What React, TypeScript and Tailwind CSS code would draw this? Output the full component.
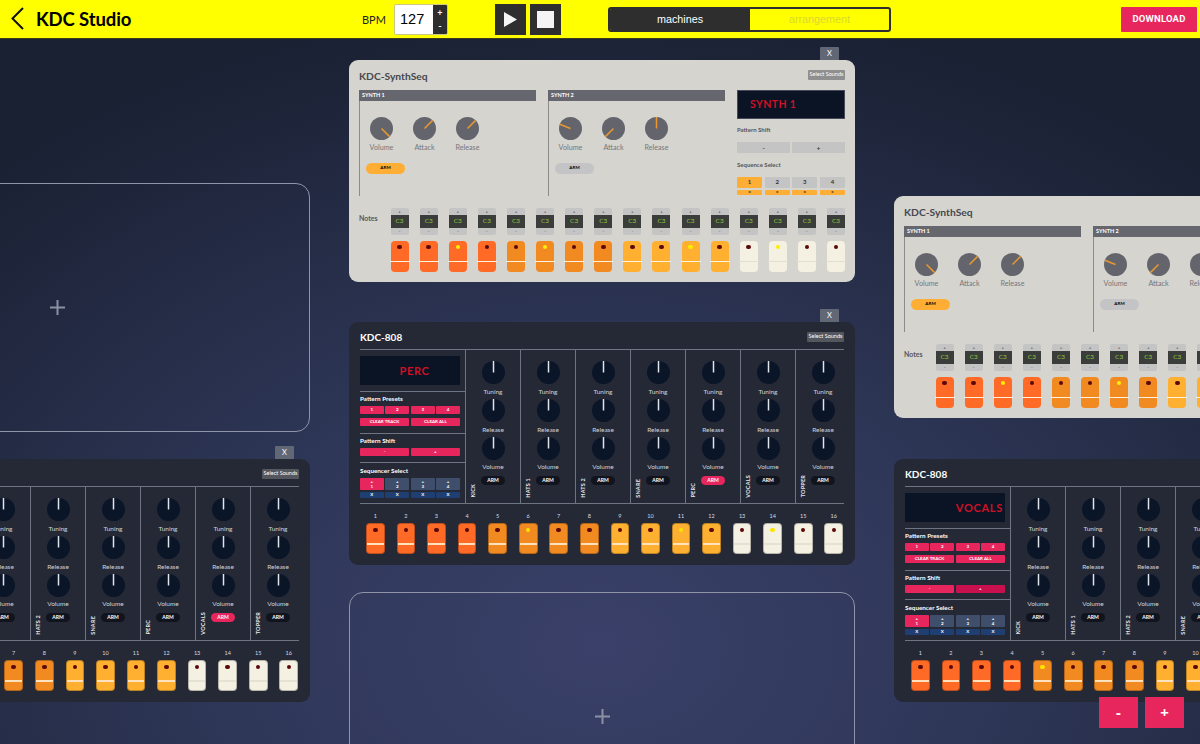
const padTone = (i: number) => (i < 4 ? 'bg-[#ff6a26]' : i < 8 ? 'bg-[#f28a22]' : i < 12 ? 'bg-[#ffb030]' : 'bg-[#f4f0e2]')
const steps = Array.from({ length: 16 }, (_, i) => i)

function Knob({ angle, face, tick }: { angle: number; face: string; tick: string }) {
  const rad = (angle * Math.PI) / 180
  const ex = 11.5 + Math.sin(rad) * 11.5
  const ey = 11.5 - Math.cos(rad) * 11.5
  return (
    <svg width="23" height="23" viewBox="0 0 23 23" className="block shrink-0">
      <circle cx="11.5" cy="11.5" r="11.5" fill={face} />
      <line x1="11.5" y1="11.5" x2={ex} y2={ey} stroke={tick} strokeWidth="1.5" />
    </svg>
  )
}

function CloseTab() {
  return (
    <button className="absolute -top-[13px] right-[16px] flex h-[13px] w-[19px] items-center justify-center rounded-t-[1px] bg-[#626775] text-[7.5px] font-normal leading-none text-white">
      X
    </button>
  )
}

function SelectSounds({ tone }: { tone: string }) {
  return (
    <button className={`flex h-[10px] w-[37px] items-center justify-center rounded-[1px] text-[5.5px] leading-none text-white ${tone}`}>
      Select Sounds
    </button>
  )
}

function SynthBlock({ name, angles, armed }: { name: string; angles: number[]; armed?: boolean }) {
  const labels = ['Volume', 'Attack', 'Release']
  return (
    <div className="w-[177px]">
      <div className="flex h-[11px] items-center bg-[#66676e] pl-[3px] text-[5.5px] font-bold leading-none text-white">{name}</div>
      <div className="h-[95px] border-l border-[#8b8b8b] pl-[6px] pt-[15.5px]">
        <div className="flex gap-[20px] pl-[4px]">
          {labels.map((l, i) => (
            <div key={l} className="flex w-[23px] flex-col items-center">
              <Knob angle={angles[i]} face="#64656c" tick="#e8982f" />
              <div className="mt-[4px] text-[7.2px] leading-[8px] text-[#77777c]">{l}</div>
            </div>
          ))}
        </div>
        <div className={`mt-[11px] flex h-[11px] w-[39px] items-center justify-center rounded-full text-[4.5px] font-bold leading-none text-black ${armed ? 'bg-[#ffae35]' : 'bg-[#c4c4c6]'}`}>
          ARM
        </div>
      </div>
    </div>
  )
}

function SynthPad({ i, lit }: { i: number; lit: boolean }) {
  return (
    <div className={`relative mt-[6px] flex h-[31px] justify-center rounded-[4px] pt-[4px] ${padTone(i)}`}>
      <span className={`size-[4.5px] rounded-full ${lit ? 'bg-[#ffee00]' : 'bg-[#5a0808]'}`} />
      <span className={`absolute -left-[1px] -right-[1px] top-[20px] h-[1px] ${i < 12 ? 'bg-[#fff3df]' : 'bg-[#e2dfd0]'}`} />
    </div>
  )
}

function SynthSeq({ className, label, lit }: { className: string; label: string; lit: number[] }) {
  return (
    <div className={`absolute h-[222px] w-[506px] rounded-[9px] bg-[#d5d4ce] px-[10px] [font-family:Lato,sans-serif] ${className}`}>
      <CloseTab />
      <div className="flex h-[30px] items-start justify-between pt-[10px]">
        <div className="text-[10.3px] font-bold leading-[12px] text-[#47484e]">KDC-SynthSeq</div>
        <div className="-mt-[0.5px]"><SelectSounds tone="bg-[#8f8f90]" /></div>
      </div>
      <div className="flex h-[106px] gap-[12px]">
        <SynthBlock name="SYNTH 1" angles={[135, 45, 45]} armed />
        <SynthBlock name="SYNTH 2" angles={[-68, 225, 0]} />
        <div className="w-[108px]">
          <div className="flex h-[29px] items-center border border-[#45495a] bg-[#0b1424] pl-[12px] text-[10.5px] font-bold leading-none tracking-[0.4px] text-[#d01024]">{label}</div>
          <div className="mt-[7px] text-[6px] font-bold leading-[8px] text-[#55565c]">Pattern Shift</div>
          <div className="mt-[8px] grid grid-cols-2 gap-[2px]">
            {['-', '+'].map(s => (
              <div key={s} className="flex h-[11px] items-center justify-center bg-[#c4c4c4] text-[6px] font-bold leading-none text-[#333]">{s}</div>
            ))}
          </div>
          <div className="mt-[8px] text-[6px] font-bold leading-[8px] text-[#55565c]">Sequence Select</div>
          <div className="mt-[8px] grid grid-cols-4 gap-x-[2.4px] gap-y-[2px]">
            {[1, 2, 3, 4].map(n => (
              <div key={n} className={`flex h-[10.5px] items-center justify-center rounded-[1px] text-[6px] font-bold leading-none text-[#333] ${n === 1 ? 'bg-[#ffae35]' : 'bg-[#c4c4c4]'}`}>{n}</div>
            ))}
            {[1, 2, 3, 4].map(n => (
              <div key={n} className="flex h-[5.5px] items-center justify-center rounded-[1px] bg-[#ffae35] text-[4.5px] font-bold leading-none text-[#333]">x</div>
            ))}
          </div>
        </div>
      </div>
      <div className="mt-[11.5px] flex items-start">
        <div className="mt-[6px] w-[31.7px] text-[7px] font-bold leading-[9px] text-[#55565c]">Notes</div>
        <div className="flex gap-[11.1px]">
          {steps.map(i => (
            <div key={i} className="w-[18px]">
              <div className="flex h-[27px] flex-col items-center justify-between rounded-[2px] bg-[#c4c4c4] text-[4.5px] leading-[7px] text-[#333]">
                <span className="h-[7px]">+</span>
                <span className="flex h-[13.5px] w-full items-center justify-center bg-[#3a3d3a] text-[6.5px] leading-none text-[#8fc23f]">C3</span>
                <span className="h-[7px]">-</span>
              </div>
              <SynthPad i={i} lit={lit.includes(i + 1)} />
            </div>
          ))}
        </div>
      </div>
    </div>
  )
}

function PinkBtn({ children, className }: { children: React.ReactNode; className?: string }) {
  return (
    <div className={`flex items-center justify-center rounded-[1px] text-[4.5px] font-bold leading-none text-white ${className ?? 'bg-[#e8265e]'}`}>
      {children}
    </div>
  )
}

function Channel({ name, armed, last }: { name: string; armed?: boolean; last?: boolean }) {
  return (
    <div className={`relative flex h-[153px] flex-col items-center pt-[11.5px] ${last ? 'w-[48px] pl-[6px]' : 'w-[55px] border-r border-[#6f7483]'}`}>
      {['Tuning', 'Release', 'Volume'].map(l => (
        <div key={l} className="flex h-[37.8px] flex-col items-center">
          <Knob angle={0} face="#0b1528" tick="#dfe3ea" />
          <div className="mt-[3.8px] text-[6.5px] leading-[8px] text-[#cfd2d8]">{l}</div>
        </div>
      ))}
      <div className={`mt-[1.5px] flex h-[9px] w-[24px] items-center justify-center rounded-full text-[5px] font-bold leading-none text-white ${armed ? 'bg-[#e8265e]' : 'bg-[#11141d]'}`}>
        ARM
      </div>
      <span className="absolute bottom-[5px] left-[4px] rotate-180 text-[5.5px] font-bold leading-[7px] tracking-[0.2px] text-[#e6e8ec] [writing-mode:vertical-rl]">{name}</span>
    </div>
  )
}

function Tr808({ className, label, labelClass, armed, lit, shiftHot }: {
  className: string; label: string; labelClass: string; armed: string; lit: number[]; shiftHot?: boolean
}) {
  const names = ['KICK', 'HATS 1', 'HATS 2', 'SNARE', 'PERC', 'VOCALS', 'TOPPER']
  const heading = 'text-[6.3px] font-bold leading-[8px] text-white'
  return (
    <div className={`absolute h-[243px] w-[506px] rounded-[9px] bg-[#252936] px-[11px] [font-family:Lato,sans-serif] ${className}`}>
      <CloseTab />
      <div className="flex h-[26.5px] items-start justify-between pt-[10px]">
        <div className="text-[10px] font-bold leading-[11px] text-white">KDC-808</div>
        <SelectSounds tone="bg-[#55575f]" />
      </div>
      <div className="flex border-y border-[#6f7483]">
        <div className="w-[106px] shrink-0 border-r border-[#6f7483]">
          <div className="h-[41px] pr-[5px] pt-[6px]">
            <div className={`flex h-[29px] items-center bg-[#0b1424] text-[11px] font-bold leading-none tracking-[0.7px] text-[#d01024] ${labelClass}`}>{label}</div>
          </div>
          <div className="h-[42px] border-t border-[#6f7483] pr-[5px] pt-[3.5px]">
            <div className={heading}>Pattern Presets</div>
            <div className="mt-[3px] grid grid-cols-4 gap-[1.7px]">
              {[1, 2, 3, 4].map(n => <PinkBtn key={n} className="h-[8.3px] bg-[#e8265e]">{n}</PinkBtn>)}
            </div>
            <div className="mt-[4px] grid grid-cols-2 gap-[1.7px]">
              <PinkBtn className="h-[8px] bg-[#e8265e]">CLEAR TRACK</PinkBtn>
              <PinkBtn className="h-[8px] bg-[#e8265e]">CLEAR ALL</PinkBtn>
            </div>
          </div>
          <div className="h-[29.5px] border-t border-[#6f7483] pr-[5px] pt-[3.5px]">
            <div className={heading}>Pattern Shift</div>
            <div className="mt-[3px] grid grid-cols-2 gap-[1.7px]">
              <PinkBtn className="h-[8.3px] bg-[#e8265e]">-</PinkBtn>
              <PinkBtn className={`h-[8.3px] ${shiftHot ? 'bg-[#c9104e]' : 'bg-[#e8265e]'}`}>+</PinkBtn>
            </div>
          </div>
          <div className="border-t border-[#6f7483] pr-[5px] pt-[3.5px]">
            <div className={heading}>Sequencer Select</div>
            <div className="mt-[3.5px] grid grid-cols-4 gap-[1.7px]">
              {[1, 2, 3, 4].map(n => (
                <div key={n} className={`flex h-[12.3px] flex-col items-center justify-center rounded-[1px] text-[4.5px] font-bold leading-[5px] text-white ${n === 1 ? 'bg-[#e8265e]' : 'bg-[#3f4f6b]'}`}>
                  <span>+</span><span>{n}</span>
                </div>
              ))}
              {[1, 2, 3, 4].map(n => (
                <div key={n} className="flex h-[6px] items-center justify-center rounded-[1px] bg-[#1f3f73] text-[4.5px] font-bold leading-none text-white">X</div>
              ))}
            </div>
          </div>
        </div>
        <div className="flex">
          {names.map((n, i) => <Channel key={n} name={n} armed={n === armed} last={i === 6} />)}
        </div>
      </div>
      <div className="mt-[8px] flex gap-[11.88px] pl-[6px]">
        {steps.map(i => (
          <div key={i} className="flex w-[18.7px] flex-col items-center">
            <div className="h-[8px] text-[5.5px] leading-[8px] text-[#d8dae0]">{i + 1}</div>
            <div className={`relative mt-[3.5px] flex h-[31px] w-full justify-center rounded-[4px] border border-[#00000040] pt-[3.5px] ${padTone(i)}`}>
              <span className={`size-[4.5px] rounded-full ${lit.includes(i + 1) ? 'bg-[#ffe400]' : 'bg-[#5a0808]'}`} />
              <span className={`absolute inset-x-0 top-[18.5px] h-[2px] ${i < 12 ? 'bg-[#ffe2bd]' : 'bg-[#e6e2d2]'}`} />
            </div>
          </div>
        ))}
      </div>
    </div>
  )
}

function EmptySlot({ className }: { className: string }) {
  return (
    <div className={`absolute flex h-[249px] w-[506px] items-center justify-center rounded-[14px] border border-[#8f94a8] ${className}`}>
      <svg width="15" height="15" viewBox="0 0 15 15">
        <path d="M7.5 0v15M0 7.5h15" stroke="#8b90a3" strokeWidth="2" />
      </svg>
    </div>
  )
}

export default function App() {
  return (
    <div className="flex h-[744px] w-[1200px] flex-col overflow-hidden bg-[#1a2133]">
      <header className="flex h-[39px] shrink-0 items-center border-b border-[#3a3a20] bg-[#ffff00] [font-family:Lato,sans-serif]">
        <svg width="36" height="38" viewBox="0 0 36 38" className="shrink-0">
          <path d="M23 8 12.5 18.5 23 29" fill="none" stroke="#111" strokeWidth="2" />
        </svg>
        <div className="w-[326px] text-[18.5px] font-bold leading-none tracking-[-0.1px] text-black">KDC Studio</div>
        <div className="w-[32px] text-[11px] leading-none text-[#222]">BPM</div>
        <div className="flex h-[31px] w-[54px] overflow-hidden rounded-[2px] border border-[#c9c98a]">
          <div className="flex w-[39px] items-center bg-white pl-[5px] text-[14.5px] leading-none text-black [font-family:'Liberation_Sans',sans-serif]">127</div>
          <div className="flex w-[15px] flex-col items-center justify-between bg-[#2e2e2e] py-[3px] text-[9px] font-bold leading-[10px] text-white">
            <span>+</span><span>-</span>
          </div>
        </div>
        <div className="ml-[47px] flex gap-[4px]">
          <div className="flex size-[31px] items-center justify-center bg-[#2e2e2e]">
            <svg width="13" height="15" viewBox="0 0 13 15"><path d="M0 0 13 7.5 0 15z" fill="#f4f4f4" /></svg>
          </div>
          <div className="flex size-[31px] items-center justify-center bg-[#2e2e2e]">
            <span className="size-[17px] bg-[#f4f4f4]" />
          </div>
        </div>
        <div className="ml-[47px] flex h-[25px] w-[283px] overflow-hidden rounded-[3px] border-2 border-[#2e2e2e] text-[10.8px] leading-none [font-family:'Liberation_Sans',sans-serif]">
          <div className="flex w-[140px] items-center justify-center bg-[#2e2e2e] text-white">machines</div>
          <div className="flex flex-1 items-center justify-center text-[#d9d92e]">arrangement</div>
        </div>
        <button className="ml-[230px] flex h-[25px] w-[76px] items-center justify-center rounded-[1px] bg-[#e8265e] text-[9.5px] font-bold leading-none tracking-[0.2px] text-white [font-family:Roboto,sans-serif]">
          DOWNLOAD
        </button>
      </header>
      <main className="relative flex-1 bg-[radial-gradient(ellipse_900px_640px_at_50%_86%,#3a4069_0%,#2e3657_45%,#1a2133_100%)]">
        <SynthSeq className="left-[349px] top-[21px]" label="SYNTH 1" lit={[3, 6, 11, 14]} />
        <SynthSeq className="left-[894px] top-[157px]" label="SYNTH 1" lit={[3, 7]} />
        <Tr808 className="left-[349px] top-[283px]" label="PERC" labelClass="justify-center pl-[9px]" armed="PERC" lit={[6, 11, 14]} />
        <Tr808 className="-left-[196px] top-[420px]" label="PERC" labelClass="justify-center pl-[9px]" armed="VOCALS" lit={[]} />
        <Tr808 className="left-[894px] top-[420px]" label="VOCALS" labelClass="justify-end pr-[2px]" armed="" lit={[5]} shiftHot />
        <EmptySlot className="-left-[196px] top-[144px]" />
        <EmptySlot className="left-[349px] top-[553px]" />
        <div className="absolute right-[16px] top-[658px] flex gap-[7px]">
          <button className="flex h-[31px] w-[39px] items-center justify-center bg-[#e8265e] text-[15px] font-bold leading-none text-white">-</button>
          <button className="flex h-[31px] w-[39px] items-center justify-center bg-[#e8265e] text-[15px] font-bold leading-none text-white">+</button>
        </div>
      </main>
    </div>
  )
}
